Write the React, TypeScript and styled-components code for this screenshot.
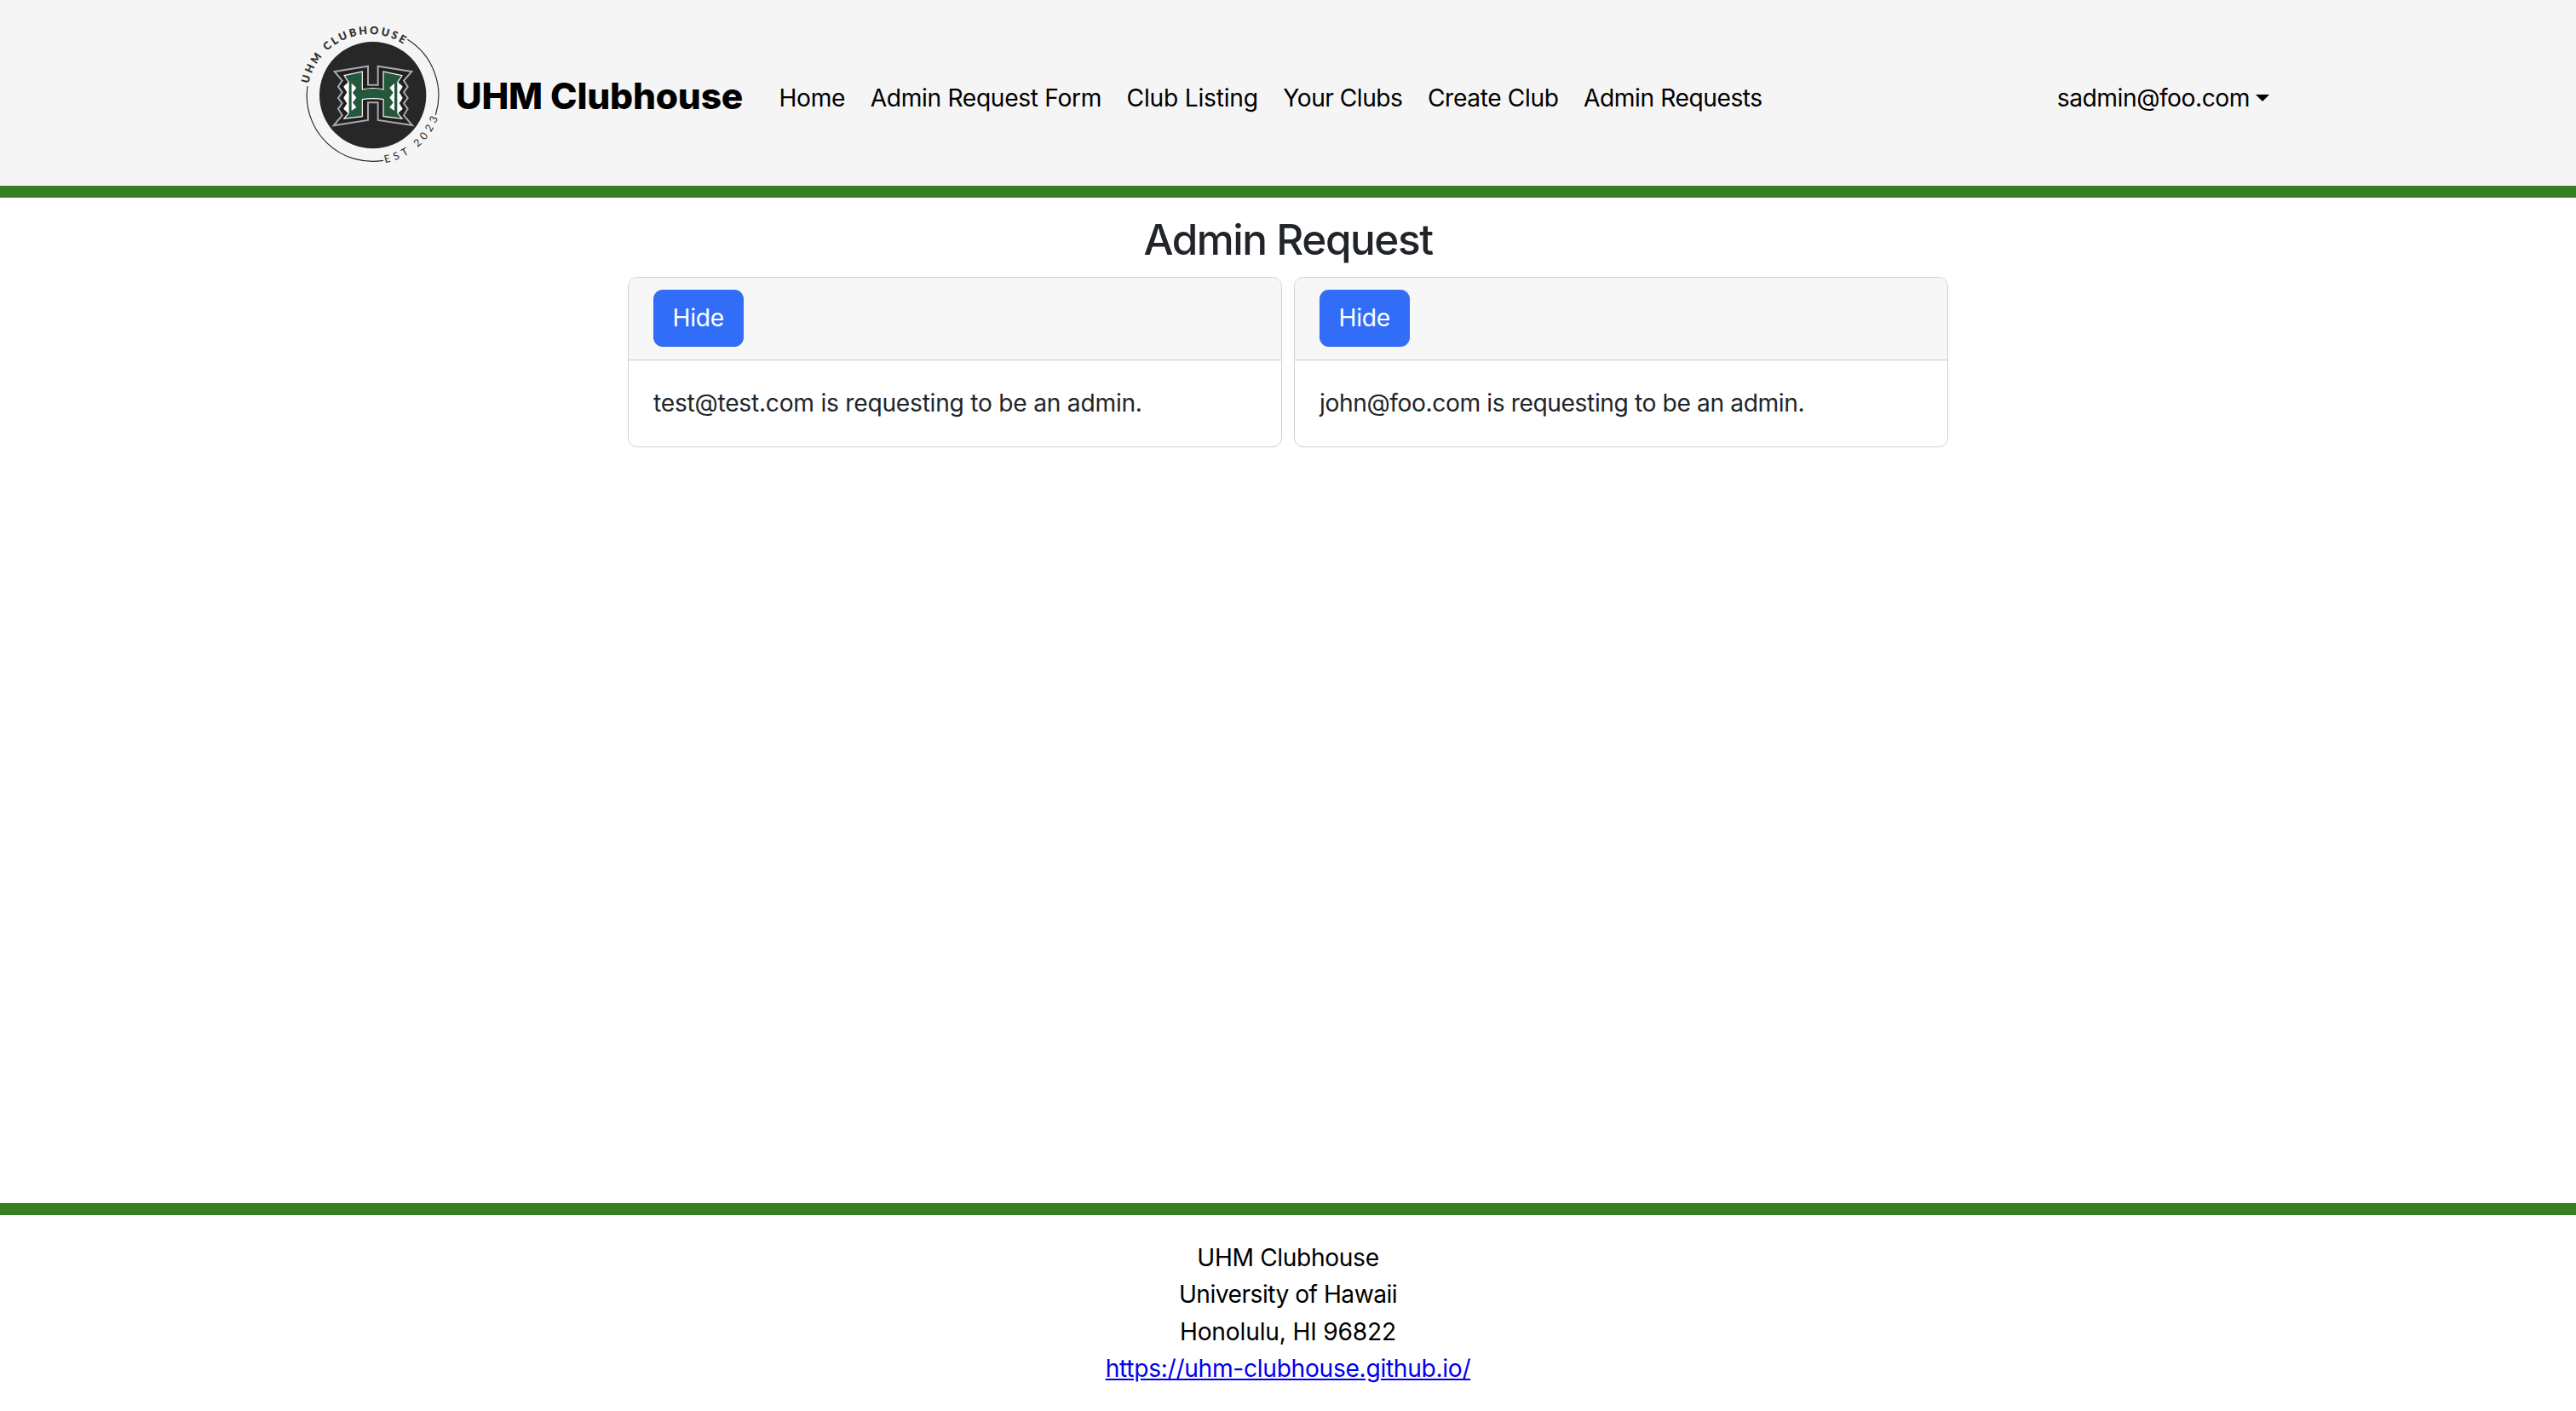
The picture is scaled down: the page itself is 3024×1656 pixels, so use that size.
import React from 'react';
import styled, { createGlobalStyle } from 'styled-components';

const GlobalStyle = createGlobalStyle`
  *, *::before, *::after { box-sizing: border-box; }
  body {
    margin: 0;
    background: #fff;
    color: #212529;
    font-family: Inter, "Liberation Sans", sans-serif;
    font-size: 28.2px;
    line-height: 43.3px;
  }
  h1, p { margin: 0; }
`;

const Page = styled.div`
  display: flex;
  flex-direction: column;
  height: 1656px;
`;

const Header = styled.header`
  display: flex;
  align-items: center;
  height: 232px;
  padding: 0 360px 0 340px;
  background: #f5f5f5;
  border-bottom: 14px solid #377e22;
`;

const Brand = styled.a`
  display: flex;
  align-items: center;
  color: #000;
  text-decoration: none;
`;

const LogoSvg = styled.svg`
  display: block;
  width: 190px;
  height: 180px;
  margin-top: 2px;
`;

const BrandName = styled.span`
  margin: 8px 0 0 4.7px;
  width: 379.8px;
  font-size: 42.5px;
  font-weight: 800;
  letter-spacing: -0.2px;
  white-space: nowrap;
`;

const Nav = styled.nav`
  display: flex;
  flex: 1;
  gap: 29.5px;
  padding-top: 14px;
`;

const NavLink = styled.a<{ $tracking: number }>`
  color: #000;
  text-decoration: none;
  white-space: nowrap;
  letter-spacing: ${(p) => p.$tracking}px;
`;

const UserMenu = styled(NavLink)`
  display: flex;
  align-items: center;
  gap: 7px;
  margin-left: auto;
`;

const Caret = styled.span`
  margin-top: -2px;
  border-top: 8px solid #000;
  border-left: 8px solid transparent;
  border-right: 8px solid transparent;
`;

const Main = styled.main`
  flex: 1;
  width: 1550px;
  margin: 0 auto;
  padding-top: 19px;
`;

const Title = styled.h1`
  font-size: 49.5px;
  font-weight: 500;
  line-height: 60px;
  letter-spacing: -1.47px;
  text-align: center;
`;

const CardGrid = styled.div`
  display: grid;
  grid-template-columns: 1fr 1fr;
  gap: 14px;
  margin-top: 14px;
`;

const Card = styled.article`
  border: 1px solid #d0d1d2;
  border-radius: 11px;
  overflow: hidden;
`;

const CardHeader = styled.div`
  height: 97px;
  padding: 14px 29px;
  background: #f7f7f7;
  border-bottom: 1px solid #c8c9ca;
`;

const HideButton = styled.button`
  display: block;
  width: 105.5px;
  height: 67px;
  padding: 1px 0 0;
  border: 0;
  border-radius: 11px;
  background: #316df6;
  color: #fff;
  font: inherit;
  letter-spacing: -0.2px;
`;

const CardBody = styled.p<{ $tracking: number }>`
  height: 101px;
  padding: 29px 29px 0;
  letter-spacing: ${(p) => p.$tracking}px;
`;

const Footer = styled.footer`
  height: 244px;
  padding-top: 29px;
  border-top: 14px solid #377e22;
  color: #000;
  text-align: center;
`;

const FooterLine = styled.div<{ $tracking: number }>`
  letter-spacing: ${(p) => p.$tracking}px;
`;

const FooterLink = styled.a`
  color: #0000ee;
  text-decoration: underline;
`;

const NAV_ITEMS = [
  { label: 'Home', tracking: -0.33 },
  { label: 'Admin Request Form', tracking: -0.34 },
  { label: 'Club Listing', tracking: -0.22 },
  { label: 'Your Clubs', tracking: -0.52 },
  { label: 'Create Club', tracking: -0.39 },
  { label: 'Admin Requests', tracking: -0.45 },
];

const REQUESTS = [
  { email: 'test@test.com', tracking: -0.25 },
  { email: 'john@foo.com', tracking: -0.4 },
];

const H_OUTLINE =
  'M158 192L276 173V239H311V173L430 192L402 224L416 245L402 265L416 285L402 304L416 323L402 346L432 381L311 363V301H276V363L155 382L185 346L171 323L185 304L171 285L185 265L171 245L185 224Z';

function Logo() {
  return (
    <LogoSvg viewBox="0 0 570 540" aria-label="UHM Clubhouse logo">
      <defs>
        <path id="arcTop" d="M66.8 234.3A220 220 0 0 1 417.4 106.6" />
        <path id="arcBottom" d="M336 513.5A243 243 0 0 0 527 340" />
      </defs>
      <circle cx="293" cy="275" r="188" fill="#272727" />
      <path d="M63 243A231.5 231.5 0 0 0 330 505" fill="none" stroke="#272727" strokeWidth="3.4" />
      <path d="M415 79A231.5 231.5 0 0 1 514 345" fill="none" stroke="#272727" strokeWidth="3.4" />
      <text fontFamily="Lato" fontWeight="700" fontSize="37" fill="#272727" stroke="#272727" strokeWidth="0.8">
        <textPath href="#arcTop" textLength="424">UHM CLUBHOUSE</textPath>
      </text>
      <text fontFamily="Lato" fontWeight="400" fontSize="37" fill="#272727">
        <textPath href="#arcBottom" textLength="256">EST 2023</textPath>
      </text>
      <path d={H_OUTLINE} fill="#231f20" stroke="#a7a9ac" strokeWidth="6" />
      <path
        d="M192 206L256 192V255Q293 246 330 255V192L396 206L380 230L396 245L384 265L396 285L384 304L396 323L380 338L396 358L330 350V290Q293 284 256 290V350L192 358L208 338L192 323L204 304L192 285L204 265L192 245L208 230Z"
        fill="#24573c"
        stroke="#fff"
        strokeWidth="3.5"
      />
      <path d="M209 230L191 245L203 265L191 285L203 304L191 323L209 338Z" fill="#fff" />
      <path d="M379 230L397 245L385 265L397 285L385 304L397 323L379 338Z" fill="#fff" />
      <path d="M218 233L235 249L222 266L235 284L222 301L235 318L218 330Z" fill="#fff" />
      <path d="M369 233L352 249L365 266L352 284L365 301L352 318L369 330Z" fill="#fff" />
    </LogoSvg>
  );
}

export default function App() {
  return (
    <Page>
      <GlobalStyle />
      <Header>
        <Brand>
          <Logo />
          <BrandName>UHM Clubhouse</BrandName>
        </Brand>
        <Nav>
          {NAV_ITEMS.map((item) => (
            <NavLink key={item.label} $tracking={item.tracking}>
              {item.label}
            </NavLink>
          ))}
          <UserMenu $tracking={-0.45}>
            sadmin@foo.com
            <Caret />
          </UserMenu>
        </Nav>
      </Header>
      <Main>
        <Title>Admin Request</Title>
        <CardGrid>
          {REQUESTS.map((r) => (
            <Card key={r.email}>
              <CardHeader>
                <HideButton>Hide</HideButton>
              </CardHeader>
              <CardBody $tracking={r.tracking}>{r.email} is requesting to be an admin.</CardBody>
            </Card>
          ))}
        </CardGrid>
      </Main>
      <Footer>
        <FooterLine $tracking={-0.37}>UHM Clubhouse</FooterLine>
        <FooterLine $tracking={-0.52}>University of Hawaii</FooterLine>
        <FooterLine $tracking={-0.19}>Honolulu, HI 96822</FooterLine>
        <FooterLine $tracking={-0.31}>
          <FooterLink>https://uhm-clubhouse.github.io/</FooterLink>
        </FooterLine>
      </Footer>
    </Page>
  );
}
